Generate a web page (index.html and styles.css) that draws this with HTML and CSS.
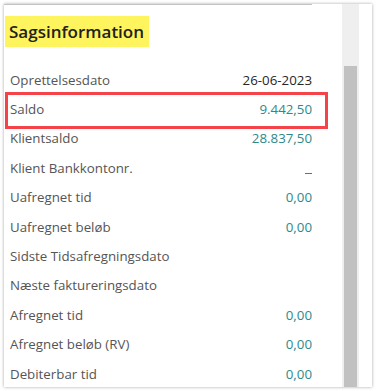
FILE: index.html
```html
<!DOCTYPE html>
<html>
  <head>
    <meta charset="UTF-8" />
    <title>Sagsinformation</title>
    <link rel="stylesheet" href="styles.css">
  </head>
  <body>
    <div class="card">
      <div class="panel">
        <div class="rule"></div>
        <div class="section">
          <div class="section_title"><span>Sagsinformation</span></div>
          <div class="rows">
            <div class="row"><span class="label">Oprettelsesdato</span><span class="value plain">26-06-2023</span></div>
            <div class="row marked"><span class="label">Saldo</span><span class="value">9.442,50</span></div>
            <div class="row"><span class="label">Klientsaldo</span><span class="value">28.837,50</span></div>
            <div class="row"><span class="label">Klient Bankkontonr.</span><span class="value dash"></span></div>
            <div class="row"><span class="label">Uafregnet tid</span><span class="value">0,00</span></div>
            <div class="row"><span class="label">Uafregnet beløb</span><span class="value">0,00</span></div>
            <div class="row"><span class="label">Sidste Tidsafregningsdato</span><span class="value"></span></div>
            <div class="row"><span class="label">Næste faktureringsdato</span><span class="value"></span></div>
            <div class="row"><span class="label">Afregnet tid</span><span class="value">0,00</span></div>
            <div class="row"><span class="label">Afregnet beløb (RV)</span><span class="value">0,00</span></div>
            <div class="row"><span class="label">Debiterbar tid</span><span class="value">0,00</span></div>
          </div>
        </div>
      </div>
      <div class="scrollbar">
        <div class="scrollbar_thumb"></div>
      </div>
    </div>
  </body>
</html>
```

FILE: styles.css
```css
html,
body {
  margin: 0;
  background: #fff;
}

body {
  padding: 4px;
  font-family: "Open Sans", "Noto Sans", sans-serif;
}

.card {
  display: flex;
  width: 368px;
  height: 383px;
  overflow: hidden;
  background: #fff;
  box-shadow: 0 0 3px rgba(0, 0, 0, 0.35);
}

.panel {
  flex: 1;
  min-width: 0;
}

.rule {
  height: 1px;
  margin-right: 30px;
  background: #c4c4c4;
}

.section {
  padding: 0 14px 0 1px;
}

.section_title {
  margin-top: 11px;
}

.section_title span {
  display: inline-block;
  height: 31px;
  padding: 0 5px 0 4px;
  line-height: 32px;
  font-size: 17px;
  font-weight: 600;
  color: #212121;
  background: #fef45d;
}

.rows {
  margin-top: 18px;
}

.row {
  position: relative;
  display: flex;
  justify-content: space-between;
  align-items: center;
  height: 29.4px;
  padding: 0 16px 0 5px;
  font-size: 13.3px;
}

.label {
  color: #555;
}

.value {
  color: #2b8a8c;
}

.value.plain {
  color: #262626;
}

/* empty bank account shows as a short teal underline */
.value.dash {
  width: 7px;
  height: 1px;
  margin-top: 12px;
  background: #2b8a8c;
}

.row.marked::after {
  content: "";
  position: absolute;
  top: -2px;
  left: 0;
  right: 0;
  bottom: -5px;
  border: 3px solid #f4444a;
}

.scrollbar {
  display: flex;
  width: 17px;
  margin-right: 13px;
  padding-top: 62px;
  box-sizing: border-box;
  background: #efefef;
}

.scrollbar_thumb {
  width: 13px;
  margin-left: 2px;
  background: #c1c1c1;
}
```
